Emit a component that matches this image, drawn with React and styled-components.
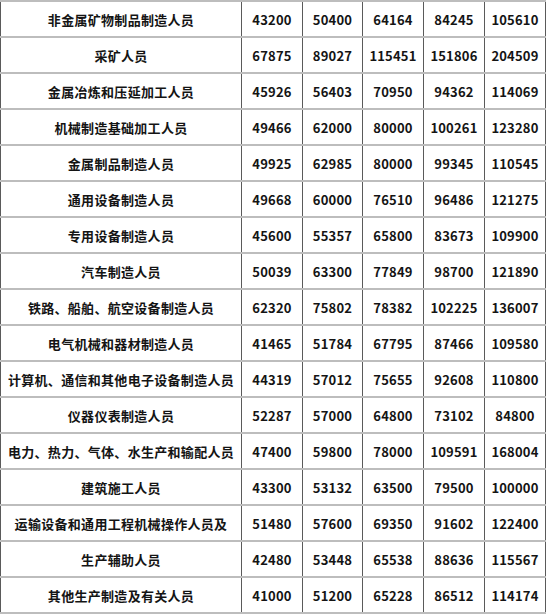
import React from "react";
import styled, { createGlobalStyle } from "styled-components";

const Global = createGlobalStyle`
  html, body { margin: 0; padding: 0; background: #ffffff; }
  body { font-family: "Noto Sans CJK SC", "Noto Sans", sans-serif; }
`;

const rows = [
  ["非金属矿物制品制造人员", 43200, 50400, 64164, 84245, 105610],
  ["采矿人员", 67875, 89027, 115451, 151806, 204509],
  ["金属冶炼和压延加工人员", 45926, 56403, 70950, 94362, 114069],
  ["机械制造基础加工人员", 49466, 62000, 80000, 100261, 123280],
  ["金属制品制造人员", 49925, 62985, 80000, 99345, 110545],
  ["通用设备制造人员", 49668, 60000, 76510, 96486, 121275],
  ["专用设备制造人员", 45600, 55357, 65800, 83673, 109900],
  ["汽车制造人员", 50039, 63300, 77849, 98700, 121890],
  ["铁路、船舶、航空设备制造人员", 62320, 75802, 78382, 102225, 136007],
  ["电气机械和器材制造人员", 41465, 51784, 67795, 87466, 109580],
  ["计算机、通信和其他电子设备制造人员", 44319, 57012, 75655, 92608, 110800],
  ["仪器仪表制造人员", 52287, 57000, 64800, 73102, 84800],
  ["电力、热力、气体、水生产和输配人员", 47400, 59800, 78000, 109591, 168004],
  ["建筑施工人员", 43300, 53132, 63500, 79500, 100000],
  ["运输设备和通用工程机械操作人员及", 51480, 57600, 69350, 91602, 122400],
  ["生产辅助人员", 42480, 53448, 65538, 88636, 115567],
  ["其他生产制造及有关人员", 41000, 51200, 65228, 86512, 114174],
];

const Table = styled.table`
  border-collapse: collapse;
  table-layout: fixed;
  width: 546px;
  border-top: 2px solid #b8b8b8;
  border-bottom: 2px solid #b8b8b8;
`;

const Row = styled.tr`
  height: 36px;
`;

const Cell = styled.td`
  padding: 0;
  text-align: center;
  vertical-align: middle;
  font-size: 13px;
  font-weight: 700;
  color: #141414;
  white-space: nowrap;
  border-top: 2px solid #bdbdbd;
  border-bottom: 2px solid #bdbdbd;
  border-left: 1px solid #5a5a5a;
  border-right: 1px solid #5a5a5a;
  letter-spacing: ${(p) => (p.$num ? "0.2px" : "0.3px")};
`;

const widths = [241, 61, 60, 61, 61, 61];

export default function App() {
  return (
    <>
      <Global />
      <Table>
        <colgroup>
          {widths.map((w, i) => (
            <col key={i} style={{ width: w }} />
          ))}
        </colgroup>
        <tbody>
          {rows.map((r, i) => (
            <Row key={i}>
              {r.map((c, j) => (
                <Cell key={j} $num={j > 0}>
                  {c}
                </Cell>
              ))}
            </Row>
          ))}
        </tbody>
      </Table>
    </>
  );
}
